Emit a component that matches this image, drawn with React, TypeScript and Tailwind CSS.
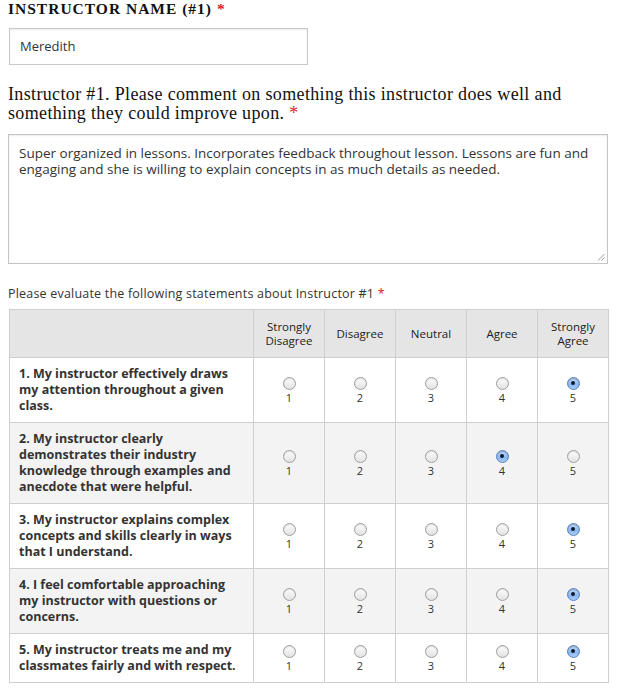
import React from "react";

const rows: { lines: string[]; sel: number }[] = [
  { lines: ["1. My instructor effectively draws", "my attention throughout a given", "class."], sel: 5 },
  {
    lines: ["2. My instructor clearly", "demonstrates their industry", "knowledge through examples and", "anecdote that were helpful."],
    sel: 4,
  },
  { lines: ["3. My instructor explains complex", "concepts and skills clearly in ways", "that I understand."], sel: 5 },
  { lines: ["4. I feel comfortable approaching", "my instructor with questions or", "concerns."], sel: 5 },
  { lines: ["5. My instructor treats me and my", "classmates fairly and with respect."], sel: 5 },
];

const headers: string[][] = [["Strongly", "Disagree"], ["Disagree"], ["Neutral"], ["Agree"], ["Strongly", "Agree"]];

function Radio({ checked }: { checked: boolean }) {
  if (checked) {
    return (
      <span className="flex h-[13px] w-[13px] items-center justify-center rounded-full border border-[#5a84c0] bg-[linear-gradient(#c4dcfa,#8ab8f0_60%,#a9cdf8)] shadow-[inset_0_1px_1px_rgba(0,0,0,0.25)]">
        <span className="h-[4px] w-[4px] rounded-full bg-[#0f1c30]" />
      </span>
    );
  }
  return (
    <span className="block h-[13px] w-[13px] rounded-full border border-[#a0a0a0] bg-[linear-gradient(#fdfdfd,#e2e2e2)] shadow-[inset_0_1px_1px_rgba(0,0,0,0.12)]" />
  );
}

export default function App() {
  const sans = { fontFamily: '"Open Sans", "DejaVu Sans", sans-serif' };
  return (
    <div className="w-[620px] bg-white pl-[8px] text-[#333]" style={sans}>
      <div
        className="text-[15.5px] font-bold leading-[18px] tracking-[1px] text-[#111]"
        style={{ fontFamily: '"Liberation Serif", serif' }}
      >
        INSTRUCTOR NAME (#1) <span className="text-[#e0201b]">*</span>
      </div>

      <div className="ml-px mt-[10px] flex h-[37px] w-[299px] items-center border border-[#c9c9c9] pl-[10px] text-[13px] text-[#333] shadow-[inset_0_1px_2px_rgba(0,0,0,0.08)]">
        Meredith
      </div>

      <div
        className="mt-[20px] text-[18px] leading-[19px] tracking-[0.35px] text-[#111]"
        style={{ fontFamily: '"Liberation Serif", serif' }}
      >
        Instructor #1. Please comment on something this instructor does well and
        <br />
        something they could improve upon. <span className="text-[#e0201b]">*</span>
      </div>

      <div className="relative mt-[11px] h-[130px] w-[600px] border border-[#c4c4c4] px-[10px] pt-[10px] text-[13.5px] leading-[16px] text-[#333] shadow-[inset_0_1px_2px_rgba(0,0,0,0.08)]">
        <div>Super organized in lessons. Incorporates feedback throughout lesson. Lessons are fun and</div>
        <div>engaging and she is willing to explain concepts in as much details as needed.</div>
        <svg className="absolute bottom-[2px] right-[2px]" width="8" height="8" viewBox="0 0 8 8">
          <line x1="1" y1="7.5" x2="7.5" y2="1" stroke="#999" strokeWidth="1" />
          <line x1="4.5" y1="7.5" x2="7.5" y2="4.5" stroke="#999" strokeWidth="1" />
        </svg>
      </div>

      <div className="mt-[22px] text-[12.5px] leading-[16px] tracking-[0.2px] text-[#333]">
        Please evaluate the following statements about Instructor #1 <span className="text-[#e0201b]">*</span>
      </div>

      <table className="ml-px mt-[7px] w-[599px] table-fixed border-collapse border border-[#cfcfcf]">
        <colgroup>
          <col className="w-[244px]" />
          <col className="w-[71px]" />
          <col className="w-[71px]" />
          <col className="w-[71px]" />
          <col className="w-[71px]" />
          <col className="w-[71px]" />
        </colgroup>
        <thead>
          <tr className="h-[48px] bg-[#e5e5e5]">
            <th className="border border-[#cfcfcf]" />
            {headers.map((h, i) => (
              <th key={i} className="border border-[#cfcfcf] text-center align-middle text-[11.5px] font-normal leading-[14px] text-[#222]">
                {h.map((l, j) => (
                  <div key={j}>{l}</div>
                ))}
              </th>
            ))}
          </tr>
        </thead>
        <tbody>
          {rows.map((r, i) => (
            <tr key={i} className={i % 2 === 1 ? "bg-[#f3f3f3]" : "bg-white"}>
              <td className="whitespace-nowrap border border-[#cfcfcf] py-[8px] pl-[9px] align-middle text-[12.5px] font-bold leading-[16px] text-[#333]">
                {r.lines.map((l, j) => (
                  <div key={j}>{l}</div>
                ))}
              </td>
              {[1, 2, 3, 4, 5].map((n) => (
                <td key={n} className="border border-[#cfcfcf] align-middle">
                  <div className="flex flex-col items-center">
                    <Radio checked={r.sel === n} />
                    <span className="mt-px text-[11px] leading-[13px] text-[#333]">{n}</span>
                  </div>
                </td>
              ))}
            </tr>
          ))}
        </tbody>
      </table>
    </div>
  );
}
